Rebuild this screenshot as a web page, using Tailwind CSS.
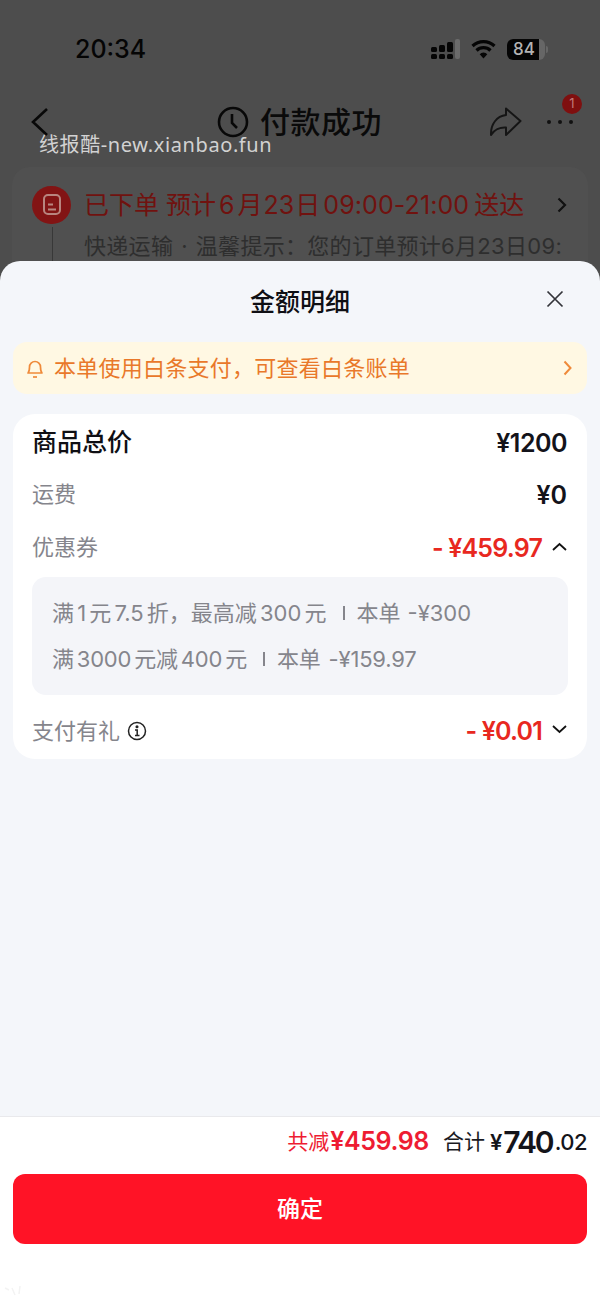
<!DOCTYPE html>
<html lang="zh-CN">
<head>
<meta charset="utf-8">
<script src="https://cdn.jsdelivr.net/npm/@tailwindcss/browser@4"></script>
</head>
<body class="m-0">
<div class="relative w-[600px] h-[1304px] overflow-hidden bg-[#4d4d4d] font-['Inter','Noto_Sans_CJK_SC',sans-serif]">
  <!-- backdrop page -->
  <div class="h-[261px] overflow-hidden relative">
    <div class="flex items-center justify-between h-[30px] mt-[34px] pl-[75px] pr-[52px]">
      <span class="text-[25px] leading-[30px] font-medium text-[#050505]">20:34</span>
      <div class="flex items-center gap-[10px]">
        <svg width="30" height="21" viewBox="0 0 30 21" fill="#050505"><rect x="0" y="8" width="6" height="5" rx="1.500"/><rect x="0" y="15" width="6" height="5" rx="1.500"/><rect x="8" y="6" width="6" height="7" rx="1.500"/><rect x="8" y="15" width="6" height="5" rx="1.500"/><rect x="16" y="3" width="6" height="10" rx="1.500"/><rect x="16" y="15" width="6" height="5" rx="1.500"/><rect x="24" y="0" width="5" height="20" rx="2" fill="#6a6a6a"/></svg>
        <svg width="25" height="20" viewBox="0 0 25 20" fill="none" stroke="#050505" stroke-width="3.200"><path d="M1.500 7a16 16 0 0 1 22 0"/><path d="M5.500 11.500a10 10 0 0 1 14 0"/><path d="M12.500 19.500l-3.800-4.300a5 5 0 0 1 7.600 0z" fill="#050505" stroke="none"/></svg>
        <div class="flex items-center ml-[1px]">
          <div class="relative w-[38px] h-[21px] rounded-[6px] bg-[#666] overflow-hidden">
            <div class="absolute inset-y-0 left-0 w-[32px] bg-[#050505]"></div>
            <span class="absolute inset-y-0 left-[6px] flex items-center text-[17px] leading-[21px] font-medium text-[#b4b4b4]">84</span>
          </div>
          <div class="w-[2px] h-[7px] ml-[1px] rounded-r bg-[#666]"></div>
        </div>
      </div>
    </div>
    <div class="relative flex items-center justify-between h-[40px] mt-[38px] pl-[29px] pr-[27px]">
      <svg width="20" height="30" viewBox="0 0 20 30" fill="none" stroke="#080808" stroke-width="2.600"><path d="M18 2L4 15l14 13"/></svg>
      <div class="absolute left-[217px] top-0 flex items-center gap-[11px]">
        <svg width="32" height="32" viewBox="0 0 32 32" fill="none" stroke="#080808" stroke-width="2.600"><circle cx="16" cy="16" r="14"/><path d="M15 8v9l5 5"/></svg>
        <span class="text-[30px] leading-[40px] font-medium tracking-[0.5px] text-[#0a0a0a]">付款成功</span>
      </div>
      <div class="relative flex items-center gap-[25px]">
        <svg width="33" height="30" viewBox="0 0 33 30" fill="none" stroke="#151515" stroke-width="2"><path d="M17 1.500L31.500 14 17 28v-7.500C11 20 5 23 2 28 1.500 17 8 9 17 8z" stroke-linejoin="round"/></svg>
        <div class="flex gap-[7px]"><i class="w-[4px] h-[4px] rounded-full bg-[#111]"></i><i class="w-[4px] h-[4px] rounded-full bg-[#111]"></i><i class="w-[4px] h-[4px] rounded-full bg-[#111]"></i></div>
        <span class="absolute -right-[9px] -top-[13px] w-[20px] h-[20px] rounded-full bg-[#7f0f0f] flex items-center justify-center text-[13px] text-[#c07a7a]">1</span>
      </div>
    </div>
    <span class="absolute left-[39px] top-[132px] text-[20px] leading-[26px] tracking-[0.6px] text-[#d2d2d2] font-['Noto_Sans','Noto_Sans_CJK_SC',sans-serif]">线报酷-new.xianbao.fun</span>
    <div class="mx-[12px] mt-[25px] h-[120px] rounded-[18px] bg-[#505050] pl-[20px] pr-[21px] pt-[18px]">
      <div class="flex items-center">
        <div class="w-[39px] h-[38px] rounded-full bg-[#821414] flex items-center justify-center">
          <svg width="18" height="21" viewBox="0 0 18 21" fill="none" stroke="#b8857f" stroke-width="2"><rect x="1" y="1" width="16" height="19" rx="4"/><path d="M5 10.500h5M5 15.500h8"/></svg>
        </div>
        <span class="ml-[13px] mt-[1px] text-[25px] leading-[38px] text-[#70120f] whitespace-nowrap">已下单 预计<span class="mx-[3px]">6</span>月<span class="mx-[1px]">23</span>日<span class="ml-[3px] mr-[5px] tracking-[0.1px]">09:00-21:00</span>送达</span>
        <svg class="ml-auto" width="10" height="16" viewBox="0 0 10 16" fill="none" stroke="#111" stroke-width="2.200"><path d="M1.500 1.500L8 8l-6.500 6.500"/></svg>
      </div>
      <div class="relative pl-[52px] mt-[4px]">
        <div class="absolute left-[20px] -top-[1px] w-[1px] h-[40px] bg-[#383838]"></div>
        <span class="text-[22px] leading-[36px] text-[#2e2e2e] whitespace-nowrap tracking-[0.3px] [word-spacing:1.5px]">快递运输 · 温馨提示：您的订单预计6月23日09:</span>
      </div>
    </div>
  </div>

  <!-- bottom sheet -->
  <div class="h-[1043px] rounded-t-[20px] bg-[#f4f6fa] flex flex-col">
    <div class="relative h-[81px] flex items-center justify-center">
      <h2 class="text-[25px] leading-[32px] font-medium text-[#0f0f14]">金额明细</h2>
      <svg class="absolute left-[546px] top-[29px]" width="18" height="18" viewBox="0 0 18 18" fill="none" stroke="#33343a" stroke-width="1.700"><path d="M1.500 1.500l15 15M16.500 1.500l-15 15"/></svg>
    </div>
    <div class="mx-[13px] h-[52px] rounded-[14px] bg-[#fff8e3] flex items-center pl-[13px] pr-[15px]">
      <svg width="18" height="22" viewBox="0 0 18 22" fill="none" stroke="#ef8a3a" stroke-width="1.700"><path d="M2 16c1.500-1.500 1.500-3 1.500-6a5.500 5.500 0 0 1 11 0c0 3 0 4.500 1.500 6z" stroke-linejoin="round"/><path d="M7 20h4"/></svg>
      <span class="ml-[10px] text-[22px] leading-[32px] tracking-[0.25px] text-[#e9782a]">本单使用白条支付，可查看白条账单</span>
      <svg class="ml-auto" width="9" height="16" viewBox="0 0 9 16" fill="none" stroke="#ef8a3a" stroke-width="2"><path d="M1.500 1.500L7.500 8l-6 6.500"/></svg>
    </div>
    <div class="mx-[13px] mt-[20px] h-[345px] rounded-[22px] bg-white pl-[19px] pr-[20px]">
      <div class="h-[57px] flex items-center justify-between">
        <span class="text-[25px] leading-[32px] -mt-[2px] font-medium text-[#0f0f14]">商品总价</span>
        <span class="text-[25px] leading-[32px] font-semibold tracking-[-0.5px] text-[#13131a]">¥1200</span>
      </div>
      <div class="h-[48px] flex items-center justify-between">
        <span class="text-[22px] leading-[32px] -mt-[3px] text-[#85858c]">运费</span>
        <span class="text-[25px] leading-[32px] font-semibold text-[#13131a]">¥0</span>
      </div>
      <div class="h-[58px] flex items-center justify-between">
        <span class="text-[22px] leading-[32px] -mt-[2px] text-[#85858c]">优惠券</span>
        <div class="flex items-center">
          <span class="text-[25px] leading-[32px] font-semibold tracking-[-0.8px] text-[#e8281f]">- ¥459.97</span>
          <svg class="ml-[10px] mb-[4px]" width="15" height="9" viewBox="0 0 15 9" fill="none" stroke="#111" stroke-width="1.800"><path d="M1 8l6.500-6 6.500 6"/></svg>
        </div>
      </div>
      <div class="h-[118px] -mr-[1px] rounded-[14px] bg-[#f4f5f9] pl-[20px] pr-[20px] pt-[13px] text-[22px] leading-[46px] text-[#85858c] [word-spacing:-3px]">
        <div class="flex items-center h-[46px] whitespace-nowrap">满 1 元 7.5 折，最高减 300 元<i class="w-[2px] h-[14px] ml-[16px] mr-[12px] bg-[#85858c]"></i>本单<span class="ml-[7px]"> -¥300</span></div>
        <div class="flex items-center h-[46px] whitespace-nowrap tracking-[-0.2px]">满 3000 元减 400 元<i class="w-[2px] h-[14px] ml-[16px] mr-[12px] bg-[#85858c]"></i>本单<span class="ml-[8px]"> -¥159.97</span></div>
      </div>
      <div class="h-[64px] pt-[8px] flex items-center justify-between">
        <div class="flex items-center gap-[7px]">
          <span class="text-[22px] leading-[32px] text-[#85858c]">支付有礼</span>
          <svg width="20" height="20" viewBox="0 0 20 20" fill="none" stroke="#222" stroke-width="1.500"><circle cx="10" cy="10" r="8.500"/><path d="M8 9h2.200v5.500M8 14.500h4.500"/><circle cx="10" cy="5.800" r=".8" fill="#222"/></svg>
        </div>
        <div class="flex items-center">
          <span class="text-[25px] leading-[32px] font-semibold tracking-[-0.8px] text-[#e8281f]">- ¥0.01</span>
          <svg class="ml-[10px] mb-[4px]" width="15" height="9" viewBox="0 0 15 9" fill="none" stroke="#111" stroke-width="1.800"><path d="M1 1l6.500 6 6.500-6"/></svg>
        </div>
      </div>
    </div>
    <div class="mt-auto h-[188px] bg-white border-t border-[#e9e9ec] px-[13px] relative">
      <div class="h-[50px] mb-[7px] flex items-center justify-end whitespace-nowrap">
        <span class="text-[21px] text-[#ee1c32]">共减</span>
        <span class="ml-[1px] text-[25px] font-semibold tracking-[-0.4px] text-[#ee1c32]">¥459.98</span>
        <span class="ml-[14px] text-[21px] text-[#1a1a1f]">合计</span>
        <span class="ml-[5px] text-[22px] font-semibold text-[#14141a]">¥</span>
        <span class="ml-[1px] text-[30px] font-semibold tracking-[-2px] text-[#14141a]">740</span>
        <span class="ml-[2px] text-[22px] font-medium tracking-[-0.5px] text-[#14141a]">.02</span>
      </div>
      <button class="w-full h-[70px] rounded-[12px] bg-[#ff1326] text-white text-[23px] font-medium">确定</button>
      <svg class="absolute left-[4px] top-[168px]" width="20" height="12" viewBox="0 0 20 12" fill="none" stroke="#f3f3f3" stroke-width="1.500"><path d="M1 3l4 2M8 3l3 7M16 1l-1 8"/></svg>
    </div>
  </div>
</div>
</body>
</html>
